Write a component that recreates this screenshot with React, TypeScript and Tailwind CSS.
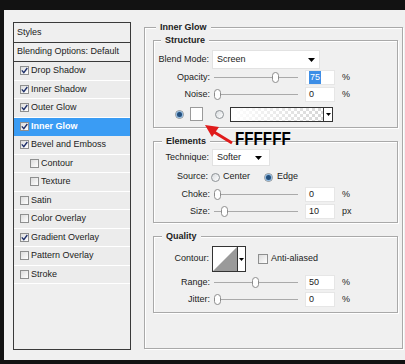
import React from "react";

type StyleItem = {
  name: string;
  checked: boolean;
  indent?: boolean;
  active?: boolean;
};

const styleItems: StyleItem[] = [
  { name: "Drop Shadow", checked: true },
  { name: "Inner Shadow", checked: true },
  { name: "Outer Glow", checked: true },
  { name: "Inner Glow", checked: true, active: true },
  { name: "Bevel and Emboss", checked: true },
  { name: "Contour", checked: false, indent: true },
  { name: "Texture", checked: false, indent: true },
  { name: "Satin", checked: false },
  { name: "Color Overlay", checked: false },
  { name: "Gradient Overlay", checked: true },
  { name: "Pattern Overlay", checked: false },
  { name: "Stroke", checked: false },
];

const CheckBox = ({ checked }: { checked: boolean }) => (
  <span className="flex h-[9px] w-[9px] shrink-0 items-center justify-center border border-[#8e8f8f] bg-gradient-to-br from-[#dcdcdc] to-white">
    {checked && (
      <svg width="7" height="7" viewBox="0 0 7 7">
        <path d="M0.8 3.4 L2.8 5.6 L6.3 1" fill="none" stroke="#1d2f6a" strokeWidth="1.4" />
      </svg>
    )}
  </span>
);

const Radio = ({ on }: { on?: boolean }) => (
  <span className="flex h-[9px] w-[9px] shrink-0 items-center justify-center rounded-full border border-[#8d9296] bg-gradient-to-br from-[#d9dcdf] to-white">
    {on && <span className="h-[5px] w-[5px] rounded-full bg-[#234f7c] shadow-[0_0_0_1px_#8fb8de]" />}
  </span>
);

const DownArrow = () => (
  <svg width="7" height="4" viewBox="0 0 7 4">
    <path d="M0 0 H7 L3.5 4 Z" fill="#000" />
  </svg>
);

const Thumb = () => (
  <svg width="7" height="11" viewBox="0 0 7 11" className="shrink-0">
    <rect x="0.5" y="0.5" width="6" height="10" rx="3" fill="#fff" stroke="#8c8c8c" />
  </svg>
);

// slider: offset is the thumb's distance from the track start
const Slider = ({ offset }: { offset: number }) => (
  <div className="ml-[4px] flex w-[84px] items-center">
    <div className="h-px bg-[#aaa]" style={{ width: offset }} />
    <Thumb />
    <div className="h-px flex-1 bg-[#aaa]" />
  </div>
);

const NumBox = ({ children }: { children: React.ReactNode }) => (
  <div className="ml-[7px] flex h-[15px] w-[30px] items-center border border-[#e6e6e6] bg-white pl-[3px] text-[#222]">
    {children}
  </div>
);

const Label = ({ text, w = "w-[56px]" }: { text: string; w?: string }) => (
  <span className={`${w} shrink-0 text-right text-[#222]`}>{text}</span>
);

const SliderRow = ({
  label,
  offset,
  value,
  unit,
}: {
  label: string;
  offset: number;
  value: React.ReactNode;
  unit: string;
}) => (
  <div className="flex h-[17px] items-center">
    <Label text={label} />
    <Slider offset={offset} />
    <NumBox>{value}</NumBox>
    <span className="ml-[7px] text-[#222]">{unit}</span>
  </div>
);

const Group = ({
  title,
  className,
  children,
  legendMl = "ml-[8px]",
}: {
  title: string;
  className: string;
  children: React.ReactNode;
  legendMl?: string;
}) => (
  <div className={`border border-[#a9a9a9] shadow-[inset_1px_1px_0_#fff,1px_1px_0_#fff] ${className}`}>
    <div className={`-mt-[7px] ${legendMl} w-fit bg-[#f0f0f0] px-[4px] font-bold leading-[12px] text-[#222]`}>
      {title}
    </div>
    {children}
  </div>
);

export default function App() {
  return (
    <div className="relative h-[364px] w-[405px] bg-[#121212] pl-[4px] pt-[10px] font-['Liberation_Sans',Arial,sans-serif] text-[9px]">
      <div className="flex h-[350px] w-[401px] bg-[#f0f0f0]">
        {/* styles list */}
        <div className="ml-[9px] mt-[12px] h-[328px] w-[118px] border border-[#3a3a3a] bg-[#efefef]">
          <div className="flex h-[20px] items-center border-b border-[#3a3a3a] pl-[3px] text-[#222]">Styles</div>
          <div className="flex h-[19px] items-center border-b border-[#3a3a3a] pl-[3px] text-[#222]">
            Blending Options: Default
          </div>
          {styleItems.map((s) => (
            <div
              key={s.name}
              className={`flex h-[18.5px] items-center border-b ${
                s.active ? "border-[#3a9cf4] bg-[#3a9cf4] font-bold text-white" : "border-white bg-[#ececec] text-[#222]"
              } ${s.indent ? "pl-[16px]" : "pl-[6px]"}`}
            >
              <CheckBox checked={s.checked} />
              <span className="ml-[2px]">{s.name}</span>
            </div>
          ))}
        </div>

        {/* inner glow panel */}
        <Group title="Inner Glow" className="ml-[13px] mt-[17px] h-[322px] w-[259px]" legendMl="ml-[11px]">
          <Group title="Structure" className="ml-[8px] mr-[4px] mt-[7px] pb-[5px]" legendMl="ml-[7px]">
            <div className="mt-[4px] flex h-[19px] items-center">
              <Label text="Blend Mode:" w="w-[55px]" />
              <div className="ml-[3px] flex h-[19px] w-[108px] items-center justify-between border border-[#e2e2e2] bg-white pl-[4px] pr-[4px] text-[#222]">
                <span>Screen</span>
                <DownArrow />
              </div>
            </div>
            <SliderRow
              label="Opacity:"
              offset={58}
              value={<span className="bg-[#3d8ee6] px-px text-white">75</span>}
              unit="%"
            />
            <SliderRow label="Noise:" offset={0} value="0" unit="%" />
            <div className="mt-[3px] flex h-[16px] items-center pl-[21px]">
              <Radio on />
              <span className="ml-[6px] h-[14px] w-[13px] border border-[#9a9a9a] bg-white" />
              <span className="ml-[12px]">
                <Radio />
              </span>
              <div className="ml-[6px] flex h-[15px] w-[103px] border border-[#333]">
                <div className="flex-1 bg-[repeating-conic-gradient(#d6d6d6_0_25%,#fff_0_50%)] bg-[length:6px_6px]">
                  <div className="h-full w-full bg-gradient-to-r from-white to-transparent" />
                </div>
                <div className="flex w-[9px] items-center justify-center border-l border-[#333] bg-white">
                  <svg width="5" height="3" viewBox="0 0 5 3">
                    <path d="M0 0 H5 L2.5 3 Z" fill="#000" />
                  </svg>
                </div>
              </div>
            </div>
          </Group>

          <Group title="Elements" className="ml-[8px] mr-[4px] mt-[13px] pb-[2px]">
            <div className="mt-[2px] flex h-[17px] items-center">
              <Label text="Technique:" w="w-[55px]" />
              <div className="ml-[3px] flex h-[17px] w-[58px] items-center justify-between border border-[#e2e2e2] bg-white pl-[4px] pr-[7px] text-[#222]">
                <span>Softer</span>
                <DownArrow />
              </div>
            </div>
            <div className="mt-[2px] flex h-[18px] items-center text-[#222]">
              <Label text="Source:" w="w-[54px]" />
              <span className="ml-[3px]">
                <Radio />
              </span>
              <span className="ml-[3px]">Center</span>
              <span className="ml-[14px]">
                <Radio on />
              </span>
              <span className="ml-[4px]">Edge</span>
            </div>
            <SliderRow label="Choke:" offset={0} value="0" unit="%" />
            <SliderRow label="Size:" offset={7} value="10" unit="px" />
          </Group>

          <Group title="Quality" className="ml-[8px] mr-[4px] mt-[13px] pb-[4px]">
            <div className="mt-[4px] flex h-[26px] items-center">
              <Label text="Contour:" w="w-[55px]" />
              <div className="ml-[3px] flex h-[26px] w-[34px] border border-[#333] bg-white">
                <svg width="24" height="24" viewBox="0 0 24 24">
                  <path d="M0 24 L24 0 V24 Z" fill="#9a9a9a" />
                </svg>
                <div className="flex flex-1 items-center justify-center border-l border-[#333]">
                  <svg width="5" height="3" viewBox="0 0 5 3">
                    <path d="M0 0 H5 L2.5 3 Z" fill="#000" />
                  </svg>
                </div>
              </div>
              <span className="ml-[12px] h-[10px] w-[10px] border border-[#8e8f8f] bg-gradient-to-br from-[#dcdcdc] to-white" />
              <span className="ml-[3px] text-[#222]">Anti-aliased</span>
            </div>
            <div className="mt-[2px]">
              <SliderRow label="Range:" offset={38} value="50" unit="%" />
            </div>
            <SliderRow label="Jitter:" offset={0} value="0" unit="%" />
          </Group>
        </Group>
      </div>

      {/* annotation */}
      <svg className="absolute left-[200px] top-[120px]" width="36" height="28" viewBox="0 0 36 28">
        <path d="M32 23 L14 12" stroke="#e01b1b" strokeWidth="3" />
        <path d="M5 5 L19 7 L12 17 Z" fill="#e01b1b" />
      </svg>
      <span className="absolute left-[235px] top-[129px] origin-left scale-x-[0.8] text-[19px] font-bold leading-none text-black">
        FFFFFF
      </span>
    </div>
  );
}
